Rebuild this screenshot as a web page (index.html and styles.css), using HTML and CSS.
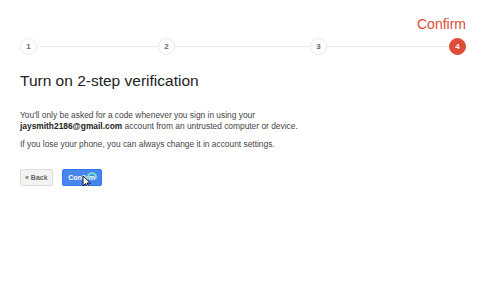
FILE: index.html
```html
<!DOCTYPE html>
<html lang="en">
<head>
    <meta charset="UTF-8">
    <title>Turn on 2-step verification</title>
    <link rel="stylesheet" href="styles.css">
</head>
<body>
    <div class="page">
        <div class="step-title">Confirm</div>
        <div class="stepper">
            <div class="step-line"></div>
            <span class="step">1</span>
            <span class="step s2">2</span>
            <span class="step s3">3</span>
            <span class="step s4 active">4</span>
        </div>

        <h1>Turn on 2-step verification</h1>

        <p>You'll only be asked for a code whenever you sign in using your<br>
        <strong>jaysmith2186@gmail.com</strong> account from an untrusted computer or device.</p>
        <p>If you lose your phone, you can always change it in account settings.</p>

        <div class="actions">
            <button class="btn">&laquo; Back</button>
            <button class="btn primary">Confirm
                <!-- puntero del ratón sobre el botón -->
                <svg class="cursor" width="10" height="14" viewBox="0 0 10 14">
                    <path d="M1 1 L1 11 L3.5 8.6 L5.3 12.6 L6.8 11.9 L5 8 L8.4 8 Z" fill="#fff" stroke="#000" stroke-width="0.9" stroke-linejoin="round"/>
                </svg>
                <svg class="ring" width="12" height="12" viewBox="0 0 12 12">
                    <path d="M2.5 8 A4 4 0 1 1 9.5 8" fill="none" stroke="#7fe0d0" stroke-width="1.8"/>
                </svg>
            </button>
        </div>
    </div>
</body>
</html>
```

FILE: styles.css
```css
body {
    margin: 0;
    background: #fff;
    font-family: Arial, "Liberation Sans", sans-serif;
    color: #222;
}
.page {
    padding: 16px 20px 0 20px;
}
.step-title {
    text-align: right;
    color: #dd4b39;
    font-size: 14px;
    line-height: 16px;
    padding-right: 14px;
}
.stepper {
    position: relative;
    display: flex;
    align-items: center;
    margin-top: 5px;
    height: 18px;
}
.step-line {
    position: absolute;
    left: 8px;
    width: 429px;
    top: 9px;
    height: 1px;
    background: #ececec;
}
.step {
    position: relative;
    width: 15px;
    height: 15px;
    border: 1px solid #e8e8e8;
    border-radius: 50%;
    background: #fff;
    font-size: 8px;
    font-weight: bold;
    color: #666;
    display: flex;
    align-items: center;
    justify-content: center;
}
.step.s2 {
    margin-left: 121px;
}
.step.s3 {
    margin-left: 135px;
}
.step.s4 {
    margin-left: 122px;
}
.step.active {
    background: #dd4b39;
    border-color: #dd4b39;
    color: #fff;
}
h1 {
    font-size: 15.5px;
    font-weight: normal;
    margin: 16px 0 19px 0;
    line-height: 20px;
    color: #222;
}
p {
    font-size: 8.4px;
    line-height: 11px;
    margin: 0 0 7px 0;
    color: #444;
}
p strong {
    color: #222;
}
.actions {
    display: flex;
    gap: 9px;
    margin-top: 19px;
}
.btn {
    position: relative;
    height: 17px;
    padding: 0 4px;
    border: 1px solid #dcdcdc;
    border-radius: 2px;
    background: #f3f3f3;
    font-family: Arial, "Liberation Sans", sans-serif;
    font-size: 7px;
    font-weight: bold;
    color: #666;
}
.btn.primary {
    width: 40px;
    background: #4787ed;
    border-color: #3079ed;
    color: #fff;
}
.cursor {
    position: absolute;
    left: 19px;
    top: 5px;
}
.ring {
    position: absolute;
    left: 23px;
    top: 1px;
}
```
